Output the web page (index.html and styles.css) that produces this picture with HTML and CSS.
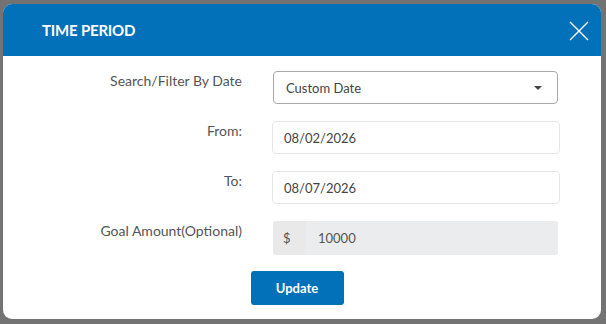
FILE: index.html
```html
<!DOCTYPE html>
<html lang="en">
<head>
    <meta charset="UTF-8">
    <meta name="viewport" content="width=device-width, initial-scale=1.0">
    <title>Time Period</title>
    <link rel="stylesheet" href="styles.css">
</head>
<body>
    <div class="modal">
        <div class="modal-header">
            <h1>TIME PERIOD</h1>
            <button class="close-btn" aria-label="Close">
                <svg width="20" height="20" viewBox="0 0 20 20">
                    <path d="M1 1 L19 19 M19 1 L1 19" stroke="#fff" stroke-width="1.4" fill="none"/>
                </svg>
            </button>
        </div>

        <div class="modal-body">
            <div class="form-row">
                <label>Search/Filter By Date</label>
                <div class="select-box">
                    <span>Custom Date</span>
                    <span class="caret"></span>
                </div>
            </div>
            <div class="form-row">
                <label>From:</label>
                <input type="text" class="field" value="08/02/2026">
            </div>
            <div class="form-row">
                <label>To:</label>
                <input type="text" class="field" value="08/07/2026">
            </div>
            <div class="form-row">
                <label>Goal Amount(Optional)</label>
                <div class="amount-group">
                    <span class="addon">$</span>
                    <input type="text" class="amount" value="10000" disabled>
                </div>
            </div>
            <div class="actions">
                <button class="update-btn">Update</button>
            </div>
        </div>
    </div>
</body>
</html>
```

FILE: styles.css
```css
body {
    font-family: Lato, "Liberation Sans", sans-serif;
    margin: 0;
    background-color: #737373;
    height: 324px;
    overflow: hidden;
}
.modal {
    margin: 4px 0 0 3px;
    width: 598px;
    height: 315px;
    background-color: white;
    border-radius: 9px;
    overflow: hidden;
}
.modal-header {
    background-color: #0271ba;
    height: 52px;
    display: flex;
    align-items: center;
    justify-content: space-between;
    padding: 0 12px 0 39px;
}
.modal-header h1 {
    margin: 0;
    color: white;
    font-size: 15px;
    font-weight: 700;
    letter-spacing: -0.2px;
}
.close-btn {
    background: none;
    border: none;
    padding: 0;
    width: 20px;
    height: 20px;
    cursor: pointer;
    margin-top: 2px;
}
.modal-body {
    padding: 15px 0 0 0;
}
.form-row {
    display: flex;
    align-items: flex-start;
    margin-bottom: 17px;
}
.form-row label {
    width: 239px;
    text-align: right;
    padding-top: 1px;
    margin-right: 30px;
    font-size: 14px;
    color: #555;
}
.select-box {
    border: 1px solid #a9a9a9;
    border-radius: 4px;
    display: flex;
    align-items: center;
    justify-content: space-between;
    padding: 0 15px 0 12px;
    box-sizing: border-box;
    width: 285px;
    height: 33px;
    margin-left: 1px;
    font-size: 13px;
    color: #444;
}
.caret {
    width: 0;
    height: 0;
    border-left: 4px solid transparent;
    border-right: 4px solid transparent;
    border-top: 4px solid #444;
}
.field {
    width: 288px;
    height: 33px;
    box-sizing: border-box;
    border: 1px solid #e6e6e6;
    border-radius: 4px;
    padding: 0 11px;
    font-family: inherit;
    font-size: 13px;
    color: #444;
    outline: none;
}
.amount-group {
    display: flex;
    width: 285px;
    height: 34px;
    margin-left: 1px;
    background-color: #ebeced;
    border-radius: 3px;
    overflow: hidden;
}
.addon {
    width: 23px;
    background-color: #e9e9ea;
    font-size: 13px;
    color: #555;
    display: flex;
    align-items: center;
    padding-left: 10px;
}
.amount {
    flex: 1;
    border: none;
    background-color: #ebeced;
    padding: 0 12px;
    font-family: inherit;
    font-size: 13px;
    color: #555;
}
.actions {
    text-align: center;
    margin-top: -1px;
}
.update-btn {
    width: 93px;
    height: 34px;
    background-color: #0271ba;
    color: white;
    border: none;
    border-radius: 3px;
    font-family: inherit;
    font-size: 13px;
    font-weight: 700;
    cursor: pointer;
    margin-left: -10px;
}
```
